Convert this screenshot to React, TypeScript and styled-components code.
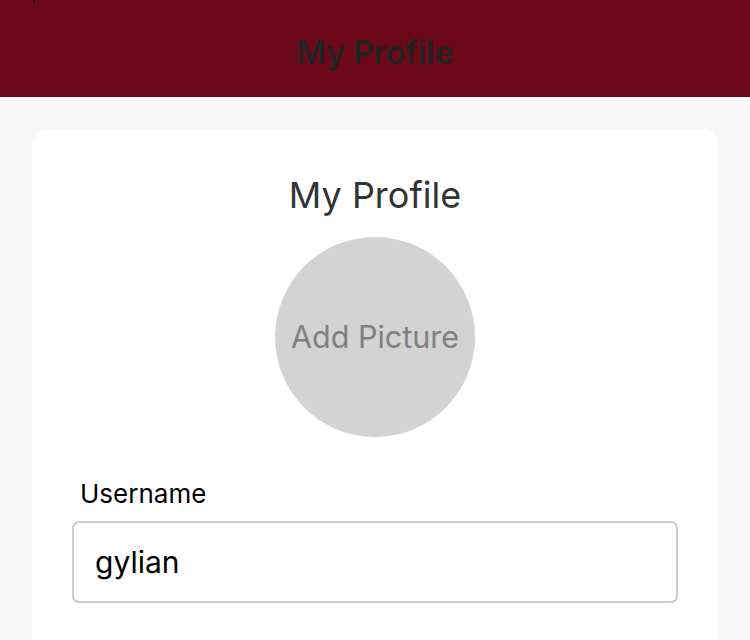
import React from "react";
import styled, { createGlobalStyle } from "styled-components";

const Global = createGlobalStyle`
  html, body { margin: 0; padding: 0; background: #f7f7f7; }
  body { font-family: Inter, "Noto Sans", sans-serif; overflow: hidden; }
`;

const Page = styled.div`
  width: 750px;
  height: 640px;
  background: #f7f7f7;
  position: relative;
  overflow: hidden;
`;

const StatusMark = styled.span`
  position: absolute;
  left: 33px;
  top: 0;
  width: 2px;
  height: 3px;
  background: #1a0a0c;
`;

const Header = styled.header`
  height: 97px;
  background: #6d0819;
  display: flex;
  align-items: center;
  justify-content: center;
  box-sizing: border-box;
  padding-top: 8px;
`;

const HeaderTitle = styled.h1`
  margin: 0;
  font-family: Inter, sans-serif;
  font-weight: 600;
  font-size: 32px;
  color: #222;
`;

const Body = styled.main`
  padding: 32px 32px 0;
`;

const Card = styled.section`
  background: #fff;
  border-radius: 16px;
  padding: 44px 40px 40px;
  display: flex;
  flex-direction: column;
  align-items: center;
  min-height: 600px;
`;

const CardTitle = styled.h2`
  margin: 0;
  font-weight: 400;
  font-size: 36px;
  line-height: 44px;
  color: #333;
`;

const Avatar = styled.button`
  margin-top: 20px;
  width: 200px;
  height: 200px;
  border-radius: 50%;
  border: none;
  background: #d3d3d3;
  color: #808080;
  font-family: Inter, "Noto Sans", sans-serif;
  font-size: 30.5px;
  display: flex;
  align-items: center;
  justify-content: center;
  padding: 0 0 2px;
`;

const Field = styled.div`
  align-self: stretch;
  margin-top: 42px;
  display: flex;
  flex-direction: column;
`;

const Label = styled.label`
  font-size: 26px;
  line-height: 30px;
  color: #000;
  padding-left: 8px;
  margin-bottom: 12px;
`;

const Input = styled.input`
  box-sizing: border-box;
  height: 82px;
  border: 2px solid #cccccc;
  border-radius: 7px;
  padding: 0 21px;
  font-family: Inter, "Noto Sans", sans-serif;
  font-size: 30px;
  color: #000;
  outline: none;
`;

export default function App() {
  return (
    <Page>
      <Global />
      <StatusMark />
      <Header>
        <HeaderTitle>My Profile</HeaderTitle>
      </Header>
      <Body>
        <Card>
          <CardTitle>My Profile</CardTitle>
          <Avatar>Add Picture</Avatar>
          <Field>
            <Label htmlFor="username">Username</Label>
            <Input id="username" defaultValue="gylian" />
          </Field>
        </Card>
      </Body>
    </Page>
  );
}
